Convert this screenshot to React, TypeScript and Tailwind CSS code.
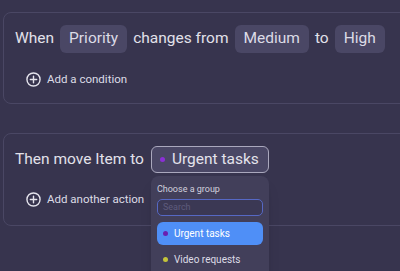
import React from 'react';

const font = { fontFamily: 'Roboto, "Noto Sans", sans-serif' };

const PlusCircle: React.FC = () => (
  <svg width="15" height="15" viewBox="0 0 16 16" fill="none" stroke="#e4e3ec" strokeWidth="1.5" strokeLinecap="round">
    <circle cx="8" cy="8" r="7" />
    <path d="M8 4.6v6.8M4.6 8h6.8" />
  </svg>
);

const Chip: React.FC<{ label: string }> = ({ label }) => (
  <span className="flex h-[28px] items-center rounded-[6px] bg-[#4a4765] px-[9px] text-[15.5px] text-[#dcdbe6]">{label}</span>
);

const App: React.FC = () => {
  return (
    <div style={font} className="h-[271px] w-[400px] overflow-hidden bg-[#37344e] pl-[3px] pt-[12px] text-[#e2e1ea]">
      <div className="h-[92px] w-[420px] rounded-[8px] border border-[#4a4764] px-[11px] pt-[12px]">
        <div className="flex items-center gap-[6px] whitespace-nowrap text-[15.5px]">
          <span>When</span>
          <Chip label="Priority" />
          <span>changes from</span>
          <Chip label="Medium" />
          <span>to</span>
          <Chip label="High" />
        </div>
        <div className="ml-[11px] mt-[18px] flex items-center gap-[6px] whitespace-nowrap text-[11.5px] text-[#dddce6]">
          <PlusCircle />
          <span>Add a condition</span>
        </div>
      </div>

      <div className="mt-[29px] h-[93px] w-[420px] rounded-[8px] border border-[#4a4764] px-[11px] pt-[12px]">
        <div className="flex items-center gap-[7px] whitespace-nowrap text-[15.5px]">
          <span>Then move Item to</span>
          <div className="relative">
            <button className="flex h-[27px] w-[118px] items-center gap-[7px] rounded-[6px] border border-[#aaa8bd] bg-[#4a4765] pl-[8px] text-[15.5px] text-[#e4e3ec]">
              <span className="h-[5px] w-[5px] rounded-full bg-[#8b2fd6]" />
              Urgent tasks
            </button>
            <div className="absolute left-0 top-[30px] z-10 h-[110px] w-[118px] rounded-[8px] bg-[#423f5a] px-[6px] pt-[8px] shadow-lg">
              <p className="text-[9px] leading-[10px] text-[#d2d1de]">Choose a group</p>
              <div className="mt-[5px] flex h-[17px] items-center rounded-[5px] border border-[#5668c4] bg-[#3b3854] px-[5px] text-[9px] text-[#5e5b7c]">
                Search
              </div>
              <div className="mt-[6px] flex h-[23px] items-center gap-[6px] rounded-[6px] bg-[#4f8ff7] pl-[6px] text-[10px] text-white">
                <span className="h-[5px] w-[5px] rounded-full bg-[#6a1fb0]" />
                Urgent tasks
              </div>
              <div className="mt-[3px] flex h-[23px] items-center gap-[6px] pl-[6px] text-[10px] text-[#dddce6]">
                <span className="h-[5px] w-[5px] rounded-full bg-[#c4c43a]" />
                Video requests
              </div>
            </div>
          </div>
        </div>
        <div className="ml-[11px] mt-[18px] flex items-center gap-[6px] whitespace-nowrap text-[11.5px] text-[#dddce6]">
          <PlusCircle />
          <span>Add another action</span>
        </div>
      </div>
    </div>
  );
};

export default App;
